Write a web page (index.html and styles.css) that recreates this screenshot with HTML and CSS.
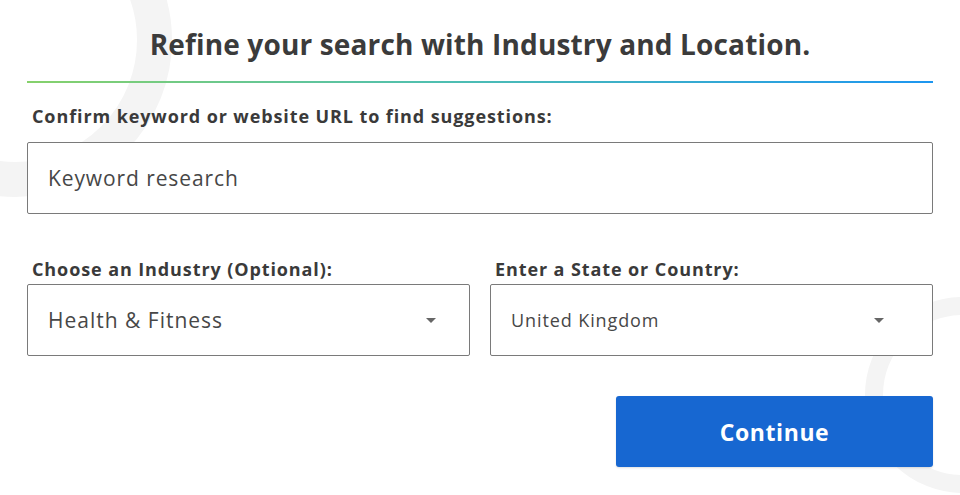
FILE: index.html
```html
<!DOCTYPE html>
<html lang="en">
<head>
<meta charset="utf-8">
<title>Refine your search</title>
<link rel="stylesheet" href="styles.css">
</head>
<body>
<svg class="deco" width="960" height="495" viewBox="0 0 960 495" aria-hidden="true">
  <circle cx="15" cy="40" r="139.5" fill="none" stroke="#f4f4f4" stroke-width="35"/>
  <circle cx="963" cy="395" r="89" fill="none" stroke="#f4f4f4" stroke-width="18"/>
</svg>
<main class="page">
  <h1 class="title">Refine your search with Industry and Location.</h1>
  <div class="divider"></div>
  <label class="label label-first">Confirm keyword or website URL to find suggestions:</label>
  <div class="field field-text">Keyword research</div>
  <div class="row">
    <div class="col">
      <label class="label">Choose an Industry (Optional):</label>
      <div class="field field-select sel-left"><span class="val-lg">Health &amp; Fitness</span><span class="caret"></span></div>
    </div>
    <div class="col">
      <label class="label">Enter a State or Country:</label>
      <div class="field field-select sel-right"><span class="val-sm">United Kingdom</span><span class="caret"></span></div>
    </div>
  </div>
  <div class="actions">
    <button class="btn">Continue</button>
  </div>
</main>
</body>
</html>
```
FILE: styles.css
```css
html, body {
  margin: 0;
  padding: 0;
  background: #ffffff;
}
body {
  width: 960px;
  height: 495px;
  overflow: hidden;
  position: relative;
  font-family: "Open Sans", "DejaVu Sans", sans-serif;
  color: #3d3d3d;
}
.deco {
  position: absolute;
  left: 0;
  top: 0;
  z-index: 0;
}
.page {
  position: relative;
  z-index: 1;
  padding: 0 27px;
}
.title {
  margin: 0;
  padding-top: 26px;
  font-size: 28px;
  line-height: 36px;
  font-weight: 700;
  letter-spacing: 0.15px;
  text-align: center;
  color: #3b3b3b;
}
.divider {
  margin-top: 19px;
  height: 2px;
  background: linear-gradient(90deg, #86d16b 0%, #4fbfb0 45%, #1d96f0 100%);
}
.label {
  display: block;
  margin-left: 5px;
  font-size: 18px;
  line-height: 22px;
  font-weight: 700;
  letter-spacing: 0.9px;
  color: #3a3a3a;
}
.label-first {
  margin-top: 22px;
}
.field {
  box-sizing: border-box;
  height: 72px;
  border: 1px solid #7a7a7a;
  border-radius: 2px;
  background: #ffffff;
  display: flex;
  align-items: center;
  color: #474747;
}
.field-text {
  margin-top: 15px;
  padding-left: 20px;
  font-size: 21px;
  letter-spacing: 0.9px;
}
.row {
  margin-top: 44px;
  display: grid;
  grid-template-columns: 1fr 1fr;
  column-gap: 20px;
}
.col .field {
  margin-top: 4px;
}
.field-select {
  justify-content: space-between;
  padding-left: 20px;
}
.sel-left {
  padding-right: 33px;
}
.sel-right {
  padding-right: 48px;
}
.val-lg {
  font-size: 21px;
  letter-spacing: 1px;
}
.val-sm {
  font-size: 18px;
  letter-spacing: 0.9px;
}
.caret {
  width: 0;
  height: 0;
  border-left: 5px solid transparent;
  border-right: 5px solid transparent;
  border-top: 5px solid #666666;
}
.actions {
  margin-top: 40px;
  display: flex;
  justify-content: flex-end;
}
.btn {
  width: 317px;
  height: 71px;
  border: none;
  border-radius: 3px;
  background: #1767d1;
  color: #ffffff;
  font-family: "Open Sans", "DejaVu Sans", sans-serif;
  font-size: 23px;
  font-weight: 700;
  letter-spacing: 0.6px;
  box-shadow: 0 1px 2px rgba(0,0,0,0.12);
}
```
